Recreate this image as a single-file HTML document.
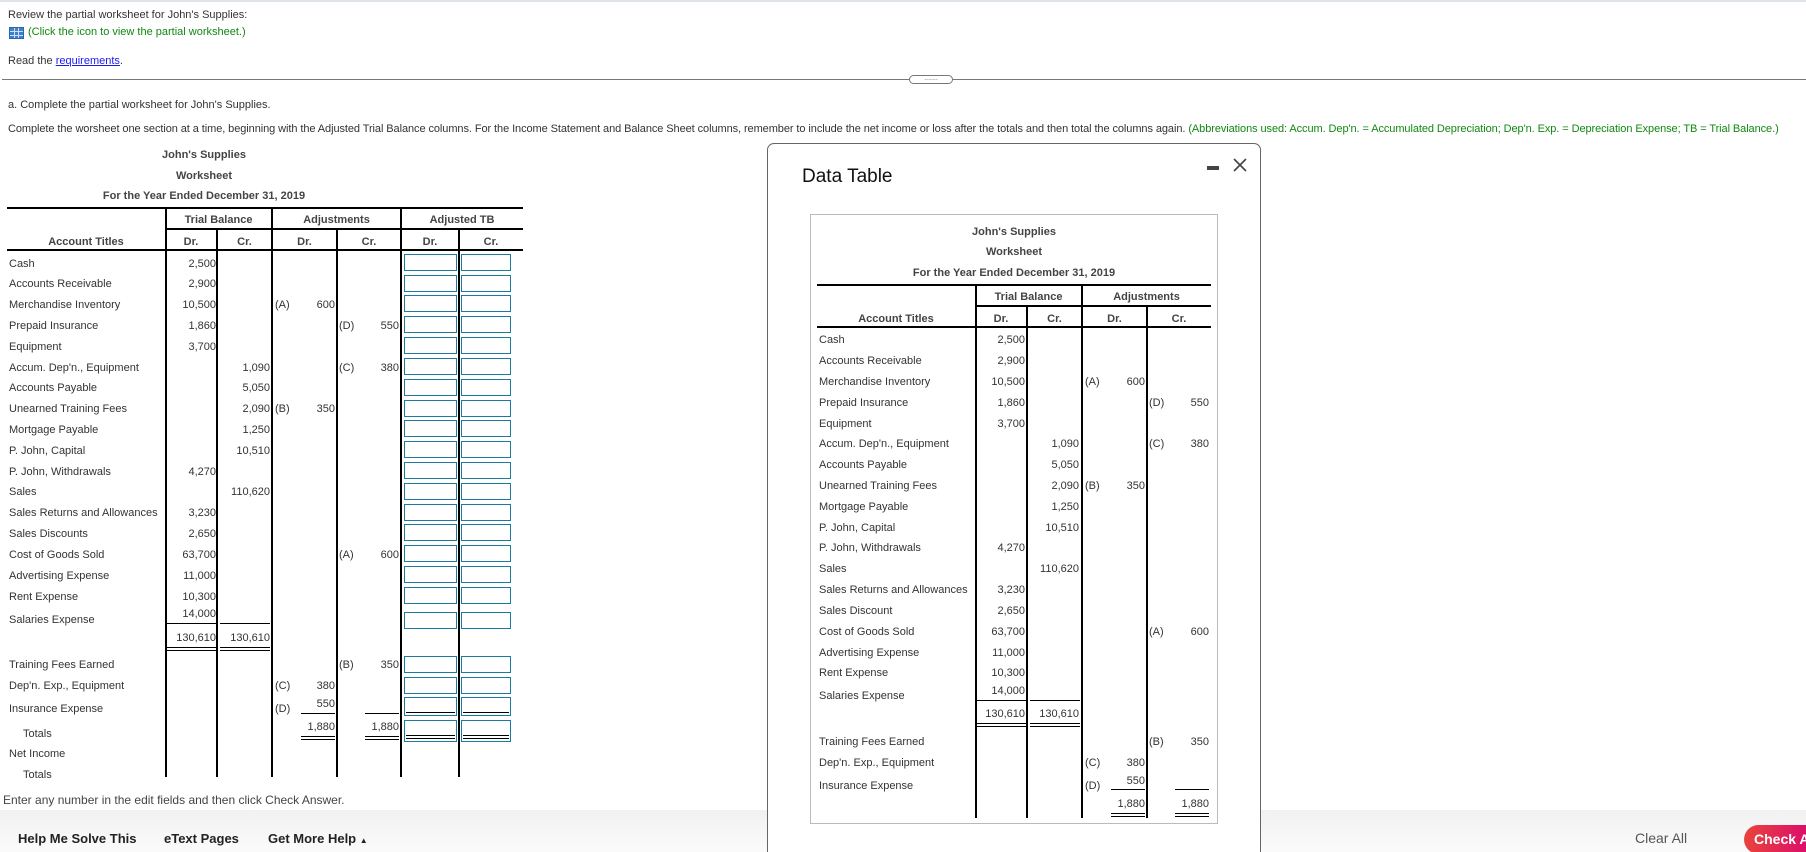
<!DOCTYPE html>
<html style="width:1806px;height:852px;overflow:hidden"><head><meta charset="utf-8">
<style>
*{margin:0;padding:0;box-sizing:border-box}
body{width:1806px;height:852px;overflow:hidden;background:#fff;font-family:"Liberation Sans",Arial,sans-serif;font-size:11px;color:#333;position:relative}
.a{position:absolute;white-space:nowrap;line-height:14px}
.r{position:absolute;white-space:nowrap;line-height:14px;text-align:right}
.c{position:absolute;white-space:nowrap;line-height:14px;text-align:center}
.h{font-weight:bold;color:#444}
.vl{position:absolute;width:2px;background:#000}
.hl{position:absolute;height:2px;background:#000}
.ul{position:absolute;height:1px;background:#000}
.dl{position:absolute;height:4px;border-top:1px solid #000;border-bottom:1px solid #000}
.bx{position:absolute;width:53px;height:17px;border:1px solid #1a7b9e;background:#fff}
.bx2{position:absolute;width:50px;height:17px;border:1px solid #1a7b9e;background:#fff}
</style></head><body>
<div style="position:absolute;left:0;top:0;width:1806px;height:2px;background:#dfe3ea"></div>
<div class="a" style="left:8px;top:8px">Review the partial worksheet for John's Supplies:</div>
<div style="position:absolute;left:9px;top:27px;width:15px;height:12px;background:#3d7fd1;border:1px solid #2b66b0">
<div style="position:absolute;left:0;top:3px;width:13px;height:1px;background:#cfe0f5"></div>
<div style="position:absolute;left:0;top:7px;width:13px;height:1px;background:#cfe0f5"></div>
<div style="position:absolute;left:4px;top:0;width:1px;height:10px;background:#cfe0f5"></div>
<div style="position:absolute;left:8px;top:0;width:1px;height:10px;background:#cfe0f5"></div></div>
<div class="a" style="left:28px;top:25px;color:#118811">(Click the icon to view the partial worksheet.)</div>
<div class="a" style="left:8px;top:54px">Read the <span style="color:#1a1aee;text-decoration:underline">requirements</span>.</div>
<div style="position:absolute;left:2px;top:79px;width:1804px;height:1px;background:#777"></div>
<div style="position:absolute;left:909px;top:75px;width:44px;height:9px;border:1px solid #777;border-radius:5px;background:#fff;font-size:7px;line-height:5px;text-align:center;color:#555">.......</div>
<div class="a" style="left:8px;top:98px">a. Complete the partial worksheet for John's Supplies.</div>
<div class="a" style="left:8px;top:122px;letter-spacing:-0.08px">Complete the worsheet one section at a time, beginning with the Adjusted Trial Balance columns. For the Income Statement and Balance Sheet columns, remember to include the net income or loss after the totals and then total the columns again. <span style="color:#118811">(Abbreviations used: Accum. Dep'n. = Accumulated Depreciation; Dep'n. Exp. = Depreciation Expense; TB = Trial Balance.)</span></div>

<div class="c h" style="left:104px;width:200px;top:148px">John's Supplies</div>
<div class="c h" style="left:104px;width:200px;top:169px">Worksheet</div>
<div class="c h" style="left:54px;width:300px;top:189px">For the Year Ended December 31, 2019</div>
<div class="hl" style="left:7px;top:207px;width:516px"></div>
<div class="hl" style="left:165px;top:228px;width:358px"></div>
<div class="hl" style="left:7px;top:249px;width:516px"></div>
<div class="c h" style="left:165px;width:107px;top:213px">Trial Balance</div>
<div class="c h" style="left:272px;width:129px;top:213px">Adjustments</div>
<div class="c h" style="left:401px;width:122px;top:213px">Adjusted TB</div>
<div class="c h" style="left:7px;width:158px;top:235px">Account Titles</div>
<div class="c h" style="left:165px;width:52px;top:235px">Dr.</div>
<div class="c h" style="left:217px;width:55px;top:235px">Cr.</div>
<div class="c h" style="left:272px;width:65px;top:235px">Dr.</div>
<div class="c h" style="left:337px;width:64px;top:235px">Cr.</div>
<div class="c h" style="left:401px;width:58px;top:235px">Dr.</div>
<div class="c h" style="left:459px;width:64px;top:235px">Cr.</div>
<div class="vl" style="left:165px;top:207px;height:570px"></div>
<div class="vl" style="left:216px;top:228px;height:549px"></div>
<div class="vl" style="left:271px;top:207px;height:570px"></div>
<div class="vl" style="left:336px;top:228px;height:549px"></div>
<div class="vl" style="left:400px;top:207px;height:570px"></div>
<div class="vl" style="left:458px;top:228px;height:549px"></div>

<div class="a" style="left:9px;top:257px">Cash</div>
<div class="a" style="left:9px;top:277px">Accounts Receivable</div>
<div class="a" style="left:9px;top:298px">Merchandise Inventory</div>
<div class="a" style="left:9px;top:319px">Prepaid Insurance</div>
<div class="a" style="left:9px;top:340px">Equipment</div>
<div class="a" style="left:9px;top:361px">Accum. Dep'n., Equipment</div>
<div class="a" style="left:9px;top:381px">Accounts Payable</div>
<div class="a" style="left:9px;top:402px">Unearned Training Fees</div>
<div class="a" style="left:9px;top:423px">Mortgage Payable</div>
<div class="a" style="left:9px;top:444px">P. John, Capital</div>
<div class="a" style="left:9px;top:465px">P. John, Withdrawals</div>
<div class="a" style="left:9px;top:485px">Sales</div>
<div class="a" style="left:9px;top:506px">Sales Returns and Allowances</div>
<div class="a" style="left:9px;top:527px">Sales Discounts</div>
<div class="a" style="left:9px;top:548px">Cost of Goods Sold</div>
<div class="a" style="left:9px;top:569px">Advertising Expense</div>
<div class="a" style="left:9px;top:590px">Rent Expense</div>
<div class="a" style="left:9px;top:613px">Salaries Expense</div>
<div class="a" style="left:9px;top:658px">Training Fees Earned</div>
<div class="a" style="left:9px;top:679px">Dep'n. Exp., Equipment</div>
<div class="a" style="left:9px;top:702px">Insurance Expense</div>
<div class="a" style="left:23px;top:727px">Totals</div>
<div class="a" style="left:9px;top:747px">Net Income</div>
<div class="a" style="left:23px;top:768px">Totals</div>

<div class="r" style="right:1590px;top:257px">2,500</div>
<div class="r" style="right:1590px;top:277px">2,900</div>
<div class="r" style="right:1590px;top:298px">10,500</div>
<div class="r" style="right:1590px;top:319px">1,860</div>
<div class="r" style="right:1590px;top:340px">3,700</div>
<div class="r" style="right:1590px;top:465px">4,270</div>
<div class="r" style="right:1590px;top:506px">3,230</div>
<div class="r" style="right:1590px;top:527px">2,650</div>
<div class="r" style="right:1590px;top:548px">63,700</div>
<div class="r" style="right:1590px;top:569px">11,000</div>
<div class="r" style="right:1590px;top:590px">10,300</div>
<div class="r" style="right:1590px;top:607px">14,000</div>
<div class="r" style="right:1590px;top:631px">130,610</div>
<div class="r" style="right:1536px;top:361px">1,090</div>
<div class="r" style="right:1536px;top:381px">5,050</div>
<div class="r" style="right:1536px;top:402px">2,090</div>
<div class="r" style="right:1536px;top:423px">1,250</div>
<div class="r" style="right:1536px;top:444px">10,510</div>
<div class="r" style="right:1536px;top:485px">110,620</div>
<div class="r" style="right:1536px;top:631px">130,610</div>
<div class="ul" style="left:167px;top:623px;width:49px"></div>
<div class="ul" style="left:220px;top:623px;width:50px"></div>
<div class="dl" style="left:167px;top:647px;width:49px"></div>
<div class="dl" style="left:220px;top:647px;width:50px"></div>
<div class="a" style="left:275px;top:298px">(A)</div><div class="r" style="right:1471px;top:298px">600</div>
<div class="a" style="left:339px;top:319px">(D)</div><div class="r" style="right:1407px;top:319px">550</div>
<div class="a" style="left:339px;top:361px">(C)</div><div class="r" style="right:1407px;top:361px">380</div>
<div class="a" style="left:275px;top:402px">(B)</div><div class="r" style="right:1471px;top:402px">350</div>
<div class="a" style="left:339px;top:548px">(A)</div><div class="r" style="right:1407px;top:548px">600</div>
<div class="a" style="left:339px;top:658px">(B)</div><div class="r" style="right:1407px;top:658px">350</div>
<div class="a" style="left:275px;top:679px">(C)</div><div class="r" style="right:1471px;top:679px">380</div>
<div class="a" style="left:275px;top:702px">(D)</div><div class="r" style="right:1471px;top:697px">550</div>
<div class="ul" style="left:301px;top:713px;width:34px"></div>
<div class="ul" style="left:365px;top:713px;width:34px"></div>
<div class="r" style="right:1471px;top:720px">1,880</div>
<div class="r" style="right:1407px;top:720px">1,880</div>
<div class="dl" style="left:301px;top:736px;width:34px"></div>
<div class="dl" style="left:365px;top:736px;width:34px"></div>

<div class="bx" style="left:404px;top:254px"></div><div class="bx2" style="left:461px;top:254px"></div>
<div class="bx" style="left:404px;top:275px"></div><div class="bx2" style="left:461px;top:275px"></div>
<div class="bx" style="left:404px;top:295px"></div><div class="bx2" style="left:461px;top:295px"></div>
<div class="bx" style="left:404px;top:316px"></div><div class="bx2" style="left:461px;top:316px"></div>
<div class="bx" style="left:404px;top:337px"></div><div class="bx2" style="left:461px;top:337px"></div>
<div class="bx" style="left:404px;top:358px"></div><div class="bx2" style="left:461px;top:358px"></div>
<div class="bx" style="left:404px;top:379px"></div><div class="bx2" style="left:461px;top:379px"></div>
<div class="bx" style="left:404px;top:400px"></div><div class="bx2" style="left:461px;top:400px"></div>
<div class="bx" style="left:404px;top:420px"></div><div class="bx2" style="left:461px;top:420px"></div>
<div class="bx" style="left:404px;top:441px"></div><div class="bx2" style="left:461px;top:441px"></div>
<div class="bx" style="left:404px;top:462px"></div><div class="bx2" style="left:461px;top:462px"></div>
<div class="bx" style="left:404px;top:483px"></div><div class="bx2" style="left:461px;top:483px"></div>
<div class="bx" style="left:404px;top:504px"></div><div class="bx2" style="left:461px;top:504px"></div>
<div class="bx" style="left:404px;top:524px"></div><div class="bx2" style="left:461px;top:524px"></div>
<div class="bx" style="left:404px;top:545px"></div><div class="bx2" style="left:461px;top:545px"></div>
<div class="bx" style="left:404px;top:566px"></div><div class="bx2" style="left:461px;top:566px"></div>
<div class="bx" style="left:404px;top:587px"></div><div class="bx2" style="left:461px;top:587px"></div>
<div class="bx" style="left:404px;top:612px"></div><div class="bx2" style="left:461px;top:612px"></div>
<div class="bx" style="left:404px;top:656px"></div><div class="bx2" style="left:461px;top:656px"></div>
<div class="bx" style="left:404px;top:677px"></div><div class="bx2" style="left:461px;top:677px"></div>
<div class="bx" style="left:404px;top:697px;height:19px"><div class="ul" style="left:1px;top:14px;width:49px"></div></div>
<div class="bx2" style="left:461px;top:697px;height:19px"><div class="ul" style="left:1px;top:14px;width:46px"></div></div>
<div class="bx" style="left:404px;top:720px;height:22px"><div class="dl" style="left:1px;top:14px;width:49px"></div></div>
<div class="bx2" style="left:461px;top:720px;height:22px"><div class="dl" style="left:1px;top:14px;width:46px"></div></div>

<div class="a" style="left:3px;top:793px;font-size:12px;color:#444">Enter any number in the edit fields and then click Check Answer.</div>

<div style="position:absolute;left:0;top:810px;width:1806px;height:42px;background:linear-gradient(#f1f1f1,#fbfbfb)"></div>
<div class="a" style="left:18px;top:831px;font-size:13px;font-weight:bold;color:#222;line-height:16px">Help Me Solve This</div>
<div class="a" style="left:164px;top:831px;font-size:13px;font-weight:bold;color:#222;line-height:16px">eText Pages</div>
<div class="a" style="left:268px;top:831px;font-size:13px;font-weight:bold;color:#222;line-height:16px">Get More Help <span style="font-size:8px">&#9650;</span></div>
<div class="a" style="left:1635px;top:830px;font-size:14px;color:#555;line-height:16px">Clear All</div>
<div style="position:absolute;left:1744px;top:825px;width:62px;height:29px;overflow:hidden;border-radius:15px 0 0 15px;background:linear-gradient(90deg,#e9443a,#dc0f6a);color:#fff;font-weight:bold;font-size:14px;line-height:29px;padding-left:10px;white-space:nowrap">Check Answer</div>

<div style="position:absolute;left:767px;top:143px;width:494px;height:709px;border:1px solid #666;border-bottom:none;border-radius:7px 7px 0 0;background:#fff"></div>
<div class="a" style="left:802px;top:166px;font-size:19px;line-height:22px;color:#111">Data Table</div>
<div style="position:absolute;left:1207px;top:166px;width:12px;height:4px;background:#444"></div>
<svg style="position:absolute;left:1233px;top:158px" width="14" height="14"><path d="M1 1L13 13M13 1L1 13" stroke="#444" stroke-width="1.6"/></svg>
<div style="position:absolute;left:810px;top:214px;width:408px;height:610px;border:1px solid #bbb"></div>
<div class="c h" style="left:914px;width:200px;top:225px">John's Supplies</div>
<div class="c h" style="left:914px;width:200px;top:245px">Worksheet</div>
<div class="c h" style="left:864px;width:300px;top:266px">For the Year Ended December 31, 2019</div>
<div class="hl" style="left:817px;top:284px;width:394px"></div>
<div class="hl" style="left:975px;top:305px;width:236px"></div>
<div class="hl" style="left:817px;top:326px;width:394px"></div>
<div class="c h" style="left:975px;width:107px;top:290px">Trial Balance</div>
<div class="c h" style="left:1082px;width:129px;top:290px">Adjustments</div>
<div class="c h" style="left:817px;width:158px;top:312px">Account Titles</div>
<div class="c h" style="left:975px;width:52px;top:312px">Dr.</div>
<div class="c h" style="left:1027px;width:55px;top:312px">Cr.</div>
<div class="c h" style="left:1082px;width:65px;top:312px">Dr.</div>
<div class="c h" style="left:1147px;width:64px;top:312px">Cr.</div>
<div class="vl" style="left:975px;top:284px;height:534px"></div>
<div class="vl" style="left:1026px;top:305px;height:513px"></div>
<div class="vl" style="left:1081px;top:284px;height:534px"></div>
<div class="vl" style="left:1146px;top:305px;height:513px"></div>

<div class="a" style="left:819px;top:333px">Cash</div>
<div class="a" style="left:819px;top:354px">Accounts Receivable</div>
<div class="a" style="left:819px;top:375px">Merchandise Inventory</div>
<div class="a" style="left:819px;top:396px">Prepaid Insurance</div>
<div class="a" style="left:819px;top:417px">Equipment</div>
<div class="a" style="left:819px;top:437px">Accum. Dep'n., Equipment</div>
<div class="a" style="left:819px;top:458px">Accounts Payable</div>
<div class="a" style="left:819px;top:479px">Unearned Training Fees</div>
<div class="a" style="left:819px;top:500px">Mortgage Payable</div>
<div class="a" style="left:819px;top:521px">P. John, Capital</div>
<div class="a" style="left:819px;top:541px">P. John, Withdrawals</div>
<div class="a" style="left:819px;top:562px">Sales</div>
<div class="a" style="left:819px;top:583px">Sales Returns and Allowances</div>
<div class="a" style="left:819px;top:604px">Sales Discount</div>
<div class="a" style="left:819px;top:625px">Cost of Goods Sold</div>
<div class="a" style="left:819px;top:646px">Advertising Expense</div>
<div class="a" style="left:819px;top:666px">Rent Expense</div>
<div class="a" style="left:819px;top:689px">Salaries Expense</div>
<div class="a" style="left:819px;top:735px">Training Fees Earned</div>
<div class="a" style="left:819px;top:756px">Dep'n. Exp., Equipment</div>
<div class="a" style="left:819px;top:779px">Insurance Expense</div>

<div class="r" style="right:781px;top:333px">2,500</div>
<div class="r" style="right:781px;top:354px">2,900</div>
<div class="r" style="right:781px;top:375px">10,500</div>
<div class="r" style="right:781px;top:396px">1,860</div>
<div class="r" style="right:781px;top:417px">3,700</div>
<div class="r" style="right:781px;top:541px">4,270</div>
<div class="r" style="right:781px;top:583px">3,230</div>
<div class="r" style="right:781px;top:604px">2,650</div>
<div class="r" style="right:781px;top:625px">63,700</div>
<div class="r" style="right:781px;top:646px">11,000</div>
<div class="r" style="right:781px;top:666px">10,300</div>
<div class="r" style="right:781px;top:684px">14,000</div>
<div class="r" style="right:781px;top:707px">130,610</div>
<div class="r" style="right:727px;top:437px">1,090</div>
<div class="r" style="right:727px;top:458px">5,050</div>
<div class="r" style="right:727px;top:479px">2,090</div>
<div class="r" style="right:727px;top:500px">1,250</div>
<div class="r" style="right:727px;top:521px">10,510</div>
<div class="r" style="right:727px;top:562px">110,620</div>
<div class="r" style="right:727px;top:707px">130,610</div>
<div class="ul" style="left:977px;top:700px;width:49px"></div>
<div class="ul" style="left:1030px;top:700px;width:50px"></div>
<div class="dl" style="left:977px;top:723px;width:49px"></div>
<div class="dl" style="left:1030px;top:723px;width:50px"></div>

<div class="a" style="left:1085px;top:375px">(A)</div><div class="r" style="right:661px;top:375px">600</div>
<div class="a" style="left:1149px;top:396px">(D)</div><div class="r" style="right:597px;top:396px">550</div>
<div class="a" style="left:1149px;top:437px">(C)</div><div class="r" style="right:597px;top:437px">380</div>
<div class="a" style="left:1085px;top:479px">(B)</div><div class="r" style="right:661px;top:479px">350</div>
<div class="a" style="left:1149px;top:625px">(A)</div><div class="r" style="right:597px;top:625px">600</div>
<div class="a" style="left:1149px;top:735px">(B)</div><div class="r" style="right:597px;top:735px">350</div>
<div class="a" style="left:1085px;top:756px">(C)</div><div class="r" style="right:661px;top:756px">380</div>
<div class="a" style="left:1085px;top:779px">(D)</div><div class="r" style="right:661px;top:774px">550</div>
<div class="ul" style="left:1111px;top:789px;width:34px"></div>
<div class="ul" style="left:1175px;top:789px;width:34px"></div>
<div class="r" style="right:661px;top:797px">1,880</div>
<div class="r" style="right:597px;top:797px">1,880</div>
<div class="dl" style="left:1111px;top:813px;width:34px"></div>
<div class="dl" style="left:1175px;top:813px;width:34px"></div>
</body></html>
